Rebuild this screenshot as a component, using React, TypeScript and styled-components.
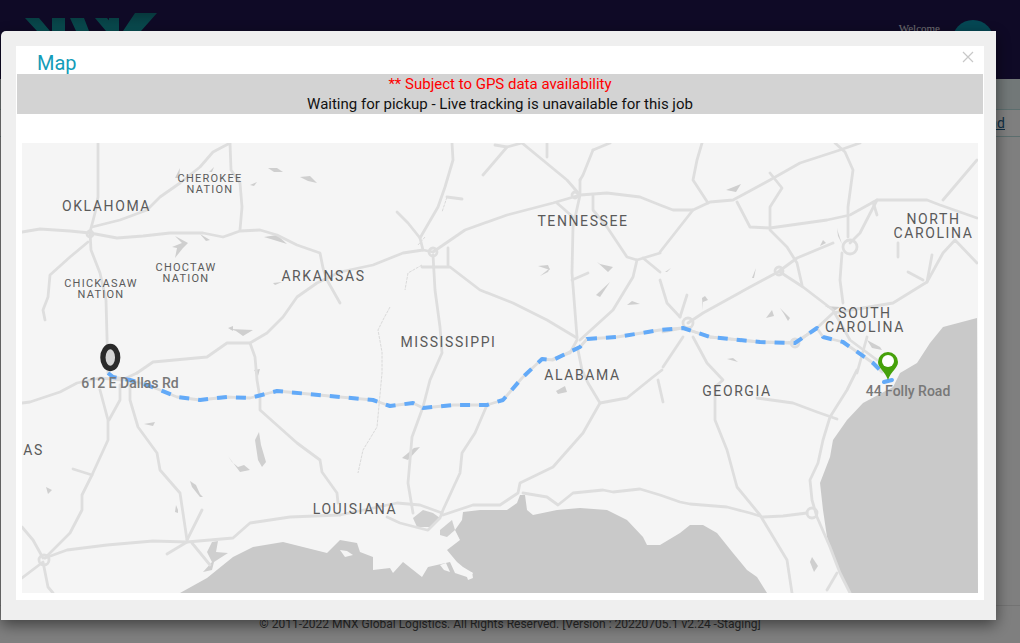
import React from "react";
import styled, { createGlobalStyle } from "styled-components";

const GlobalStyle = createGlobalStyle`
  html, body {
    margin: 0;
    height: 100%;
    overflow: hidden;
    font-family: Roboto, "Liberation Sans", sans-serif;
    background: #fff;
  }
`;

// everything below is in page coordinates, the svg viewBox starts at the map corner
const roads = [
  "M98 143 L98 197 L95 213 L90 232 L91 250 L100 273 L106 300 L107 337 L108 373",
  "M22 232 L40 229 L70 231 L90 233 L117 238 L143 236 L170 233 L203 233 L223 237 L240 231 L260 230 L277 235 L297 245 L320 253 L323 268 L327 280 L340 303",
  "M92 227 L120 220 L147 210 L160 197 L180 183 L200 167 L213 152 L230 143 L231 170 L240 183 L242 207 L240 230",
  "M88 242 L70 257 L50 275 L48 297 L43 310 L45 320",
  "M137 373 L153 362 L207 357 L227 343 L250 343 L267 333 L283 317 L297 297 L317 283 L340 272 L373 265 L403 253 L423 250 L433 252 L465 230 L507 215 L553 203 L580 195 L607 193 L640 197 L660 205 L673 210 L693 210 L710 202 L733 200 L770 180 L800 163 L840 150 L860 143",
  "M250 343 L255 357 L257 380 L260 398 L260 410 L297 443 L320 460 L322 472 L337 493 L338 503",
  "M452 143 L453 160 L445 187 L438 207 L420 238 L423 250",
  "M397 212 L408 223 L420 238",
  "M447 197 L462 199",
  "M433 255 L435 290 L440 327 L442 353 L430 380 L423 407 L412 437 L408 483 L413 513",
  "M422 267 L450 267 L480 290 L513 303 L547 320 L577 338",
  "M448 248 L448 265",
  "M580 180 L580 195 L573 227 L572 273 L577 337",
  "M593 150 L583 175 L580 180",
  "M610 143 L593 150",
  "M522 143 L567 180 L580 195",
  "M557 203 L573 217",
  "M507 147 L483 175",
  "M495 145 L507 147 L522 143",
  "M547 143 L547 157",
  "M593 195 L593 210 L607 227 L627 257 L637 260 L660 253",
  "M643 258 L660 272",
  "M637 260 L633 277 L613 310 L580 340",
  "M572 280 L588 273",
  "M577 340 L570 353 L553 359",
  "M578 350 L582 370 L588 383 L600 403 L583 433 L553 467 L520 483 L518 493 L500 505 L473 505 L443 515",
  "M600 403 L627 398 L653 377 L662 370",
  "M658 380 L663 402",
  "M487 405 L475 433 L462 453 L460 473 L443 510 L440 518 L428 530",
  "M387 517 L400 523 L427 530",
  "M340 515 L397 503 L420 505 L442 513",
  "M523 493 L547 497 L558 505 L573 493 L603 490 L613 492 L640 489 L660 495 L680 502 L690 504 L727 507 L750 513 L763 517 L783 516 L807 513",
  "M715 387 L715 420 L727 450 L737 487 L760 515 L787 560 L792 593",
  "M757 398 L793 403 L817 412 L837 419",
  "M857 370 L847 390 L830 417 L823 440 L818 463 L810 480 L812 500 L817 517 L830 547 L840 573 L850 593",
  "M837 573 L827 590",
  "M663 332 L683 328 L710 337 L760 342 L795 343 L817 328 L833 313 L893 303 L927 282 L943 253 L955 240 L977 263",
  "M693 210 L660 252",
  "M702 143 L697 160 L693 180 L708 203",
  "M835 143 L845 152 L853 170 L848 207 L848 237",
  "M770 173 L782 188 L770 207 L770 230 L787 247 L797 263 L802 285",
  "M737 202 L750 227 L770 228 L827 220 L850 215 L877 200 L927 200 L940 205 L977 218",
  "M877 200 L860 233 L850 243",
  "M873 202 L877 215",
  "M842 253 L840 280 L843 303",
  "M833 243 L797 258 L778 272 L750 287 L703 313 L688 323",
  "M780 272 L803 287 L833 310 L850 340 L877 360",
  "M660 280 L667 303 L680 317",
  "M687 295 L680 317",
  "M683 337 L663 367",
  "M693 337 L707 363 L723 380 L715 387",
  "M867 337 L857 373",
  "M943 200 L960 180 L977 160",
  "M932 255 L927 282",
  "M898 243 L898 257",
  "M908 272 L923 280",
  "M22 403 L30 402 L60 392 L77 383 L100 378 L122 380 L137 373",
  "M100 390 L108 420 L108 440 L92 475 L82 495 L82 510 L70 533 L45 558",
  "M120 385 L120 400 L109 420",
  "M130 380 L130 400 L138 427 L157 453 L160 470 L180 493 L187 540",
  "M73 469 L92 475",
  "M22 527 L33 540 L43 558",
  "M22 578 L43 562 L48 587 L53 593",
  "M45 558 L67 550 L107 545 L153 541 L187 542 L233 538 L250 523 L290 517 L340 515",
  "M187 542 L167 554",
  "M192 543 L210 565",
  "M202 510 L187 540",
];

const rivers = [
  "M390 307 L384 318 L378 330 L382 352 L382 373 L377 427 L363 450 L358 473",
  "M422 265 L408 273 L405 290",
  "M425 237 L418 245",
  "M447 197 L442 212",
];

const rings = [
  { cx: 44, cy: 560, r: 5 },
  { cx: 90, cy: 234, r: 3 },
  { cx: 433, cy: 252, r: 4 },
  { cx: 575, cy: 195, r: 3 },
  { cx: 688, cy: 323, r: 5 },
  { cx: 779, cy: 271, r: 4 },
  { cx: 850, cy: 247, r: 7 },
  { cx: 795, cy: 343, r: 4 },
  { cx: 812, cy: 513, r: 5 },
];

const gulf =
  "M180 593 L207 578 L233 557 L253 547 L283 542 L303 547 L327 553 L340 540 L357 543 L360 552 L373 557 L373 570 L390 568 L393 573 L403 562 L422 577 L428 567 L450 562 L455 573 L470 578 L473 573 L463 567 L457 562 L447 550 L460 540 L455 530 L462 520 L463 512 L480 510 L507 510 L517 503 L520 495 L525 495 L527 510 L533 515 L557 510 L580 508 L607 510 L627 520 L643 537 L647 545 L660 545 L680 533 L690 525 L703 525 L717 533 L733 553 L747 570 L757 577 L767 593 Z";

const atlantic =
  "M850 593 L837 567 L827 537 L823 510 L820 483 L830 457 L833 440 L847 420 L863 403 L893 387 L900 373 L917 363 L930 343 L943 327 L977 318 L978 593 Z";

const patches = [
  "413,518 423,510 433,513 440,518 430,527 417,527",
  "440,530 452,520 455,530 447,537 440,535",
  "207,552 212,542 218,541 216,552 228,553 214,562 212,570 203,572 212,562",
  "268,168 277,168 283,172 274,172",
  "300,177 310,176 317,183 308,181",
  "250,185 257,182 254,186",
  "175,178 180,168 179,178",
  "209,172 214,167 212,172",
  "172,247 182,243 175,236 188,243 183,248 175,258 177,248",
  "200,234 210,240 206,241",
  "228,328 233,326 233,331",
  "264,237 277,235 287,244",
  "273,283 282,282 275,285",
  "236,331 230,329 253,330 243,336",
  "254,370 260,369 258,376",
  "255,440 259,432 261,445 266,462 262,467 258,460",
  "228,456 232,462 238,467 244,465 250,470 240,472",
  "190,481 196,485 200,494 203,497 200,497 192,487",
  "176,505 178,510 178,513 175,512",
  "46,487 52,490 48,494",
  "144,424 155,422 153,426",
  "402,458 414,448 420,447 408,460",
  "540,276 550,268 548,272",
  "538,266 548,265 550,270",
  "600,264 613,267 608,272 597,262",
  "596,295 610,282 600,297",
  "627,305 640,304 632,301",
  "820,246 826,243 823,240",
  "665,272 671,268 667,272",
  "837,228 838,232 842,244 838,236",
  "752,278 756,268 754,278",
  "702,298 705,296 708,300 703,302 703,310",
  "726,190 741,184 736,192",
  "727,359 733,358 738,362",
  "825,306 840,307 834,311",
  "766,318 772,310 774,316",
  "780,308 790,318 788,321 784,314",
  "867,340 880,347 882,350 872,348",
  "812,557 818,566 814,572 810,562",
  "556,391 565,386 567,392 558,394",
];

const islands = [
  "340,550 347,551 353,555 345,557",
  "440,565 446,563 450,572 444,570",
  "466,574 472,572 473,578 468,580",
];

const route =
  "M108 373 L113 377 L130 380 L147 385 L160 390 L177 397 L200 400 L227 397 L250 398 L277 391 L340 397 L373 400 L390 406 L413 403 L423 408 L453 405 L487 405 L503 400 L522 378 L542 359 L553 360 L580 347 L587 339 L617 337 L660 330 L683 328 L710 337 L760 342 L795 343 L817 328 L823 337 L843 342 L873 363 L882 372";

const labels = [
  { lines: ["OKLAHOMA"], x: 106.5, y: 206, big: true },
  { lines: ["CHEROKEE", "NATION"], x: 210, y: 184, big: false },
  { lines: ["CHOCTAW", "NATION"], x: 186, y: 273, big: false },
  { lines: ["CHICKASAW", "NATION"], x: 101, y: 289, big: false },
  { lines: ["ARKANSAS"], x: 323.5, y: 276, big: true },
  { lines: ["TENNESSEE"], x: 583, y: 221, big: true },
  { lines: ["MISSISSIPPI"], x: 448.5, y: 342, big: true },
  { lines: ["ALABAMA"], x: 582.5, y: 375, big: true },
  { lines: ["GEORGIA"], x: 737, y: 391, big: true },
  { lines: ["LOUISIANA"], x: 355, y: 509, big: true },
  { lines: ["AS"], x: 33.5, y: 450, big: true },
  { lines: ["NORTH", "CAROLINA"], x: 933.5, y: 226, big: true },
  { lines: ["SOUTH", "CAROLINA"], x: 865, y: 320, big: true },
];

const App = () => (
  <>
    <GlobalStyle />
    <Page>
      <Header>
        <Logo viewBox="0 0 132 18" aria-hidden="true">
          <defs>
            <linearGradient id="logoFade" x1="0" y1="0" x2="0" y2="1">
              <stop offset="0" stopColor="#0e6f78" />
              <stop offset="1" stopColor="#12a0a8" />
            </linearGradient>
          </defs>
          <path
            fill="url(#logoFade)"
            d="M0 5H14L25 18H12ZM27 5H40V18H27ZM45 5H59L64 18H51ZM70 5H82L93 18H81ZM84 5H94V18H84ZM98 18L110 0H132L116 18Z"
          />
        </Logo>
        <UserBox>
          <Welcome>Welcome</Welcome>
          <Avatar />
        </UserBox>
      </Header>
      <SubBar />
      <LinkRow>
        <PageLink>nd</PageLink>
      </LinkRow>
      <Footer>
        © 2011-2022 MNX Global Logistics. All Rights Reserved. [Version :
        20220705.1 v2.24 -Staging]
      </Footer>
    </Page>
    <Backdrop>
      <Modal>
        <ModalBody>
          <TitleRow>
            <Title>Map</Title>
            <CloseButton viewBox="0 0 12 12" aria-hidden="true">
              <path d="M1 1L11 11M11 1L1 11" />
            </CloseButton>
          </TitleRow>
          <Notice>
            <NoticeRed>** Subject to GPS data availability</NoticeRed>
            <div>Waiting for pickup - Live tracking is unavailable for this job</div>
          </Notice>
          <MapBox>
            <MapDrawing viewBox="22 143 956 450" aria-hidden="true">
              <path d={gulf} fill="#c9c9c9" />
              <path d={atlantic} fill="#c9c9c9" />
              {patches.map((points) => (
                <polygon key={points} points={points} fill="#cfcfcf" />
              ))}
              {islands.map((points) => (
                <polygon key={points} points={points} fill="#f5f5f5" />
              ))}
              <g fill="none" stroke="#d6d6d6" strokeWidth="0.9" strokeDasharray="3 1">
                {rivers.map((d) => (
                  <path key={d} d={d} />
                ))}
              </g>
              <g fill="none" stroke="#dedede" strokeWidth="2.8" strokeLinejoin="round" strokeLinecap="round">
                {roads.map((d) => (
                  <path key={d} d={d} />
                ))}
                {rings.map((ring) => (
                  <circle key={ring.cx} {...ring} />
                ))}
                <path d={route} />
              </g>
              <path
                d={route}
                fill="none"
                stroke="#63aaf8"
                strokeWidth="4"
                strokeDasharray="10 9"
                strokeLinejoin="round"
              />
              <path d="M884 382 L892 380" fill="none" stroke="#63aaf8" strokeWidth="4" strokeLinecap="round" />
              <ellipse cx="110.3" cy="357.5" rx="7.4" ry="11" fill="#d4d4d4" stroke="#2a2a2a" strokeWidth="5.3" />
              <path
                d="M888 380 C885 371 878 368 878 362 A10 10 0 0 1 898 362 C898 368 891 371 888 380 Z"
                fill="#46a10a"
              />
              <circle cx="888" cy="361" r="6" fill="#fff" />
            </MapDrawing>
            {labels.map((label) => (
              <MapLabel key={label.lines.join()} $x={label.x - 22} $y={label.y - 143} $big={label.big}>
                {label.lines.map((line) => (
                  <div key={line}>{line}</div>
                ))}
              </MapLabel>
            ))}
            <PinLabel $x={130 - 22} $y={383 - 143}>612 E Dallas Rd</PinLabel>
            <PinLabel $x={908 - 22} $y={391 - 143}>44 Folly Road</PinLabel>
          </MapBox>
        </ModalBody>
      </Modal>
    </Backdrop>
  </>
);

export default App;

const Page = styled.div`
  height: 100vh;
  display: flex;
  flex-direction: column;
`;

const Header = styled.header`
  height: 79px;
  flex: none;
  background: #1e144c;
  display: flex;
  justify-content: space-between;
  align-items: flex-start;
  padding: 13px 26px 0 25px;
  box-sizing: border-box;
`;

const Logo = styled.svg`
  width: 132px;
  height: 18px;
`;

const UserBox = styled.div`
  display: flex;
  align-items: flex-start;
  gap: 12px;
`;

const Welcome = styled.div`
  font-family: "Liberation Serif", serif;
  font-size: 11px;
  color: #fff;
  opacity: 0.85;
  margin-top: 9px;
`;

const Avatar = styled.div`
  width: 42px;
  height: 42px;
  margin-top: 7px;
  border-radius: 50%;
  background: #0a8fa8;
`;

const SubBar = styled.div`
  height: 31px;
  flex: none;
  background: #e4f0f0;
  border-bottom: 1px solid #b8dcdc;
  box-sizing: border-box;
`;

const LinkRow = styled.div`
  height: 27px;
  flex: none;
  display: flex;
  justify-content: flex-end;
  align-items: center;
  padding-right: 15px;
  border-bottom: 1px solid #b8dcdc;
  box-sizing: border-box;
`;

const PageLink = styled.a`
  font-size: 14px;
  color: #1f5f8b;
  text-decoration: underline;
`;

const Footer = styled.footer`
  margin-top: auto;
  height: 38px;
  box-sizing: border-box;
  border-top: 1px solid #e6e6e6;
  padding-top: 10px;
  text-align: center;
  font-size: 12px;
  line-height: 16px;
  color: #555;
`;

const Backdrop = styled.div`
  position: fixed;
  inset: 0;
  background: rgba(0, 0, 0, 0.5);
  display: flex;
  align-items: flex-start;
  padding: 31px 0 0 1px;
`;

const Modal = styled.div`
  width: 995px;
  height: 589px;
  box-sizing: border-box;
  padding: 15px 12px 20px 15px;
  background: #efefef;
  border-radius: 5px 0 0 0;
  box-shadow: 0 5px 15px rgba(0, 0, 0, 0.5);
`;

const ModalBody = styled.div`
  height: 100%;
  background: #fff;
  display: flex;
  flex-direction: column;
  padding: 0 1px;
  box-sizing: border-box;
`;

const TitleRow = styled.div`
  height: 28px;
  flex: none;
  display: flex;
  justify-content: space-between;
  padding: 0 9px 0 20px;
`;

const Title = styled.h4`
  margin: 6px 0 0;
  font-size: 20px;
  font-weight: 400;
  line-height: 22px;
  color: #149cb8;
`;

const CloseButton = styled.svg`
  width: 12px;
  height: 12px;
  margin-top: 5px;
  fill: none;
  stroke: #c8c8c8;
  stroke-width: 1.2;
`;

const Notice = styled.div`
  height: 40px;
  flex: none;
  background: #d3d3d3;
  text-align: center;
  font-size: 15px;
  line-height: 20px;
  color: #111;
`;

const NoticeRed = styled.div`
  color: #ff0000;
`;

const MapBox = styled.div`
  position: relative;
  width: 956px;
  height: 450px;
  margin: 29px 0 0 5px;
  background: #f5f5f5;
  overflow: hidden;
`;

const MapDrawing = styled.svg`
  display: block;
  width: 100%;
  height: 100%;
  filter: blur(0.4px);
`;

const MapLabel = styled.div<{ $x: number; $y: number; $big: boolean }>`
  position: absolute;
  left: ${(p) => p.$x}px;
  top: ${(p) => p.$y}px;
  transform: translate(-50%, -50%);
  text-align: center;
  white-space: nowrap;
  font-size: ${(p) => (p.$big ? 14 : 11)}px;
  line-height: ${(p) => (p.$big ? 14 : 11)}px;
  letter-spacing: ${(p) => (p.$big ? 1.6 : 1.25)}px;
  font-weight: 400;
  color: #5a5a5a;
`;

const PinLabel = styled.div<{ $x: number; $y: number }>`
  position: absolute;
  left: ${(p) => p.$x}px;
  top: ${(p) => p.$y}px;
  transform: translate(-50%, -50%);
  white-space: nowrap;
  font-size: 14px;
  font-weight: 500;
  color: #787878;
`;
